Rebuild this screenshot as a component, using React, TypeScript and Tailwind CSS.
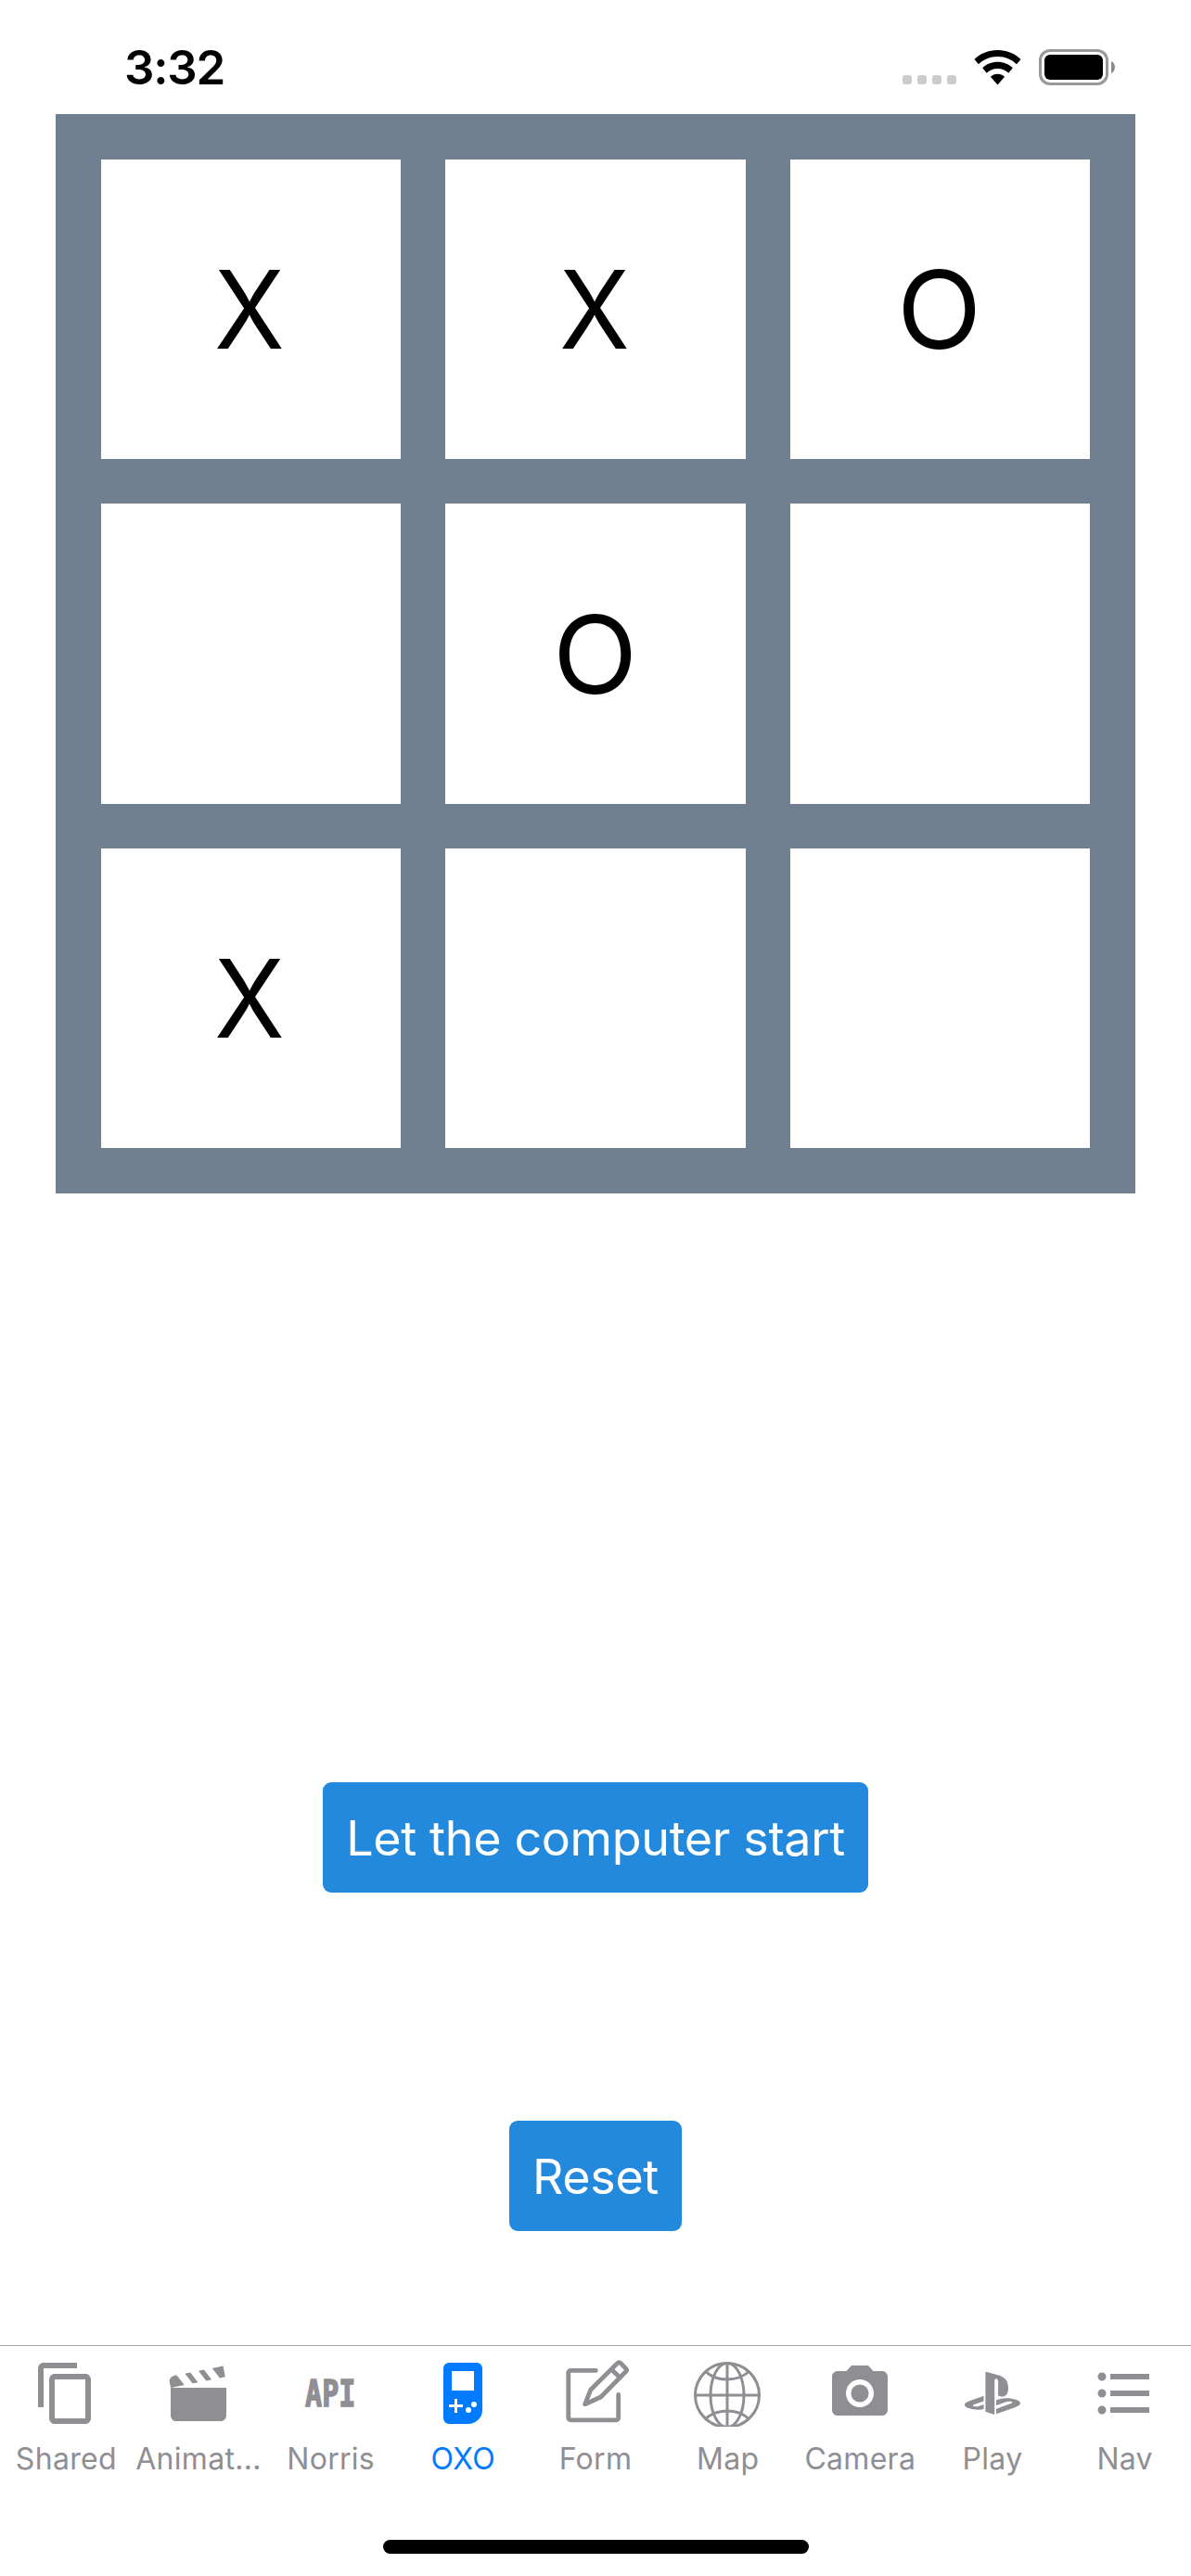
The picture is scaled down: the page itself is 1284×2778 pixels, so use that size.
import React from "react";
import { FaPlaystation } from "react-icons/fa";
import { MdPhotoCamera, MdFormatListBulleted, MdContentCopy } from "react-icons/md";

const cells = ["X", "X", "O", "", "O", "", "X", "", ""];

function Board() {
  return (
    <div className="ml-[60px] grid h-[1164px] w-[1164px] grid-cols-[323px_324px_323px] grid-rows-[323px_324px_323px] gap-12 bg-[#708090] p-[49px]">
      {cells.map((mark, i) => (
        <div key={i} className="flex items-center justify-center bg-white text-[117px] leading-none text-black">
          <span className={mark === "X" ? "mr-[3px] scale-x-[0.95]" : "mr-px scale-x-[1.02]"}>{mark}</span>
        </div>
      ))}
    </div>
  );
}

function StatusBar() {
  return (
    <div className="flex h-[123px] items-start justify-between pl-[134px] pr-[82px]">
      <div className="mt-[48px] text-[51px] font-semibold leading-[50px] tracking-[-1.2px]">3:32</div>
      <div className="mt-[53px] flex h-[39px]">
        <div className="mt-[28px] flex gap-[6px]">
          {[0, 1, 2, 3].map((i) => (
            <div key={i} className="h-[10px] w-[10px] rounded-[3px] bg-[#cbcbcb]" />
          ))}
        </div>
        <svg className="ml-[19px] mt-px h-[38px] w-[51px]" viewBox="0 0 51 38">
          <path d="M25.5 0C35.3 0 44.2 3.8 50.5 10L46 15.2C40.8 10.1 33.6 6.9 25.5 6.9S10.2 10.1 5 15.2L.5 10C6.8 3.8 15.7 0 25.5 0Z" />
          <path d="M25.5 12.8C31.8 12.8 37.6 15.2 41.8 19.2L37.3 24.8C34.2 21.7 30.1 19.9 25.5 19.9S16.8 21.7 13.7 24.8L9.2 19.2C13.4 15.2 19.2 12.8 25.5 12.8Z" />
          <path d="M25.5 25.8C28.4 25.8 31 26.9 33.1 28.7L25.5 37.5L17.9 28.7C20 26.9 22.6 25.8 25.5 25.8Z" />
        </svg>
        <div className="ml-[19px] h-[39px] w-[75px] rounded-[12px] border-[3px] border-[#999] p-[3px]">
          <div className="h-full w-full rounded-[6px] bg-black" />
        </div>
        <svg className="ml-[3px] mt-[13px] h-[13px] w-[4px]" viewBox="0 0 4 13">
          <path d="M0 0C2.4 1.1 4 3.6 4 6.5S2.4 11.9 0 13Z" fill="#8a8a8a" />
        </svg>
      </div>
    </div>
  );
}

function MovieIcon() {
  return (
    <svg viewBox="0 0 24 24" className="h-full w-full" fill="currentColor">
      <path d="M20.84 2.18L16.91 2.96L19.65 6.5L21.62 6.1L20.84 2.18M13.97 3.54L12 3.93L14.75 7.46L16.71 7.07L13.97 3.54M9.07 4.5L7.1 4.91L9.85 8.44L11.81 8.05L9.07 4.5M4.16 5.5L3.18 5.69A2 2 0 0 0 1.61 8.04L2 10L6.9 9.03L4.16 5.5M2 10V20C2 21.1 2.9 22 4 22H20C21.11 22 22 21.1 22 20V10H2Z" />
    </svg>
  );
}

function ApiIcon() {
  return (
    <div className="flex h-full w-full items-center justify-center">
      <span className="scale-x-[0.77] font-['DejaVu_Sans_Mono',monospace] text-[39px] font-bold leading-none [-webkit-text-stroke:1.5px_currentColor]">API</span>
    </div>
  );
}

function GameIcon() {
  return (
    <svg viewBox="0 0 24 24" className="h-full w-full">
      <path d="M7 1h10a2 2 0 0 1 2 2v15a5 5 0 0 1-5 5H7a2 2 0 0 1-2-2V3a2 2 0 0 1 2-2z" fill="currentColor" />
      <path d="M8 4h8v7H8zM9 14h1v2h2v1h-2v2H9v-2H7v-1h2z" fill="#fff" />
      <circle cx="14" cy="18" r="1" fill="#fff" />
      <circle cx="16" cy="16" r="1" fill="#fff" />
    </svg>
  );
}

function NoteIcon() {
  return (
    <svg viewBox="0 0 72 72" className="h-full w-full" fill="none" stroke="currentColor" strokeWidth="4.8" strokeLinecap="round" strokeLinejoin="round">
      <path d="M36.3 11.4H9.2A2.4 2.4 0 0 0 6.800 13.800V62.400A2.400 2.400 0 0 0 9.200 64.800H58.300A2.400 2.400 0 0 0 60.700 62.400V37.400" />
      <path d="M59.5 3.6L30.7 32.3L24.7 47.7L41.7 40L69 12.300Q70.200 10.900 69 9.600L63.300 3.600Q61.300 1.800 59.500 3.600ZM53.300 10.300L62.300 19" />
    </svg>
  );
}

function GlobeIcon() {
  return (
    <svg viewBox="0 0 72 72" className="h-full w-full" fill="none" stroke="currentColor" strokeWidth="3">
      <circle cx="36" cy="38" r="34.5" />
      <ellipse cx="36" cy="38" rx="18" ry="34.5" />
      <path d="M36 3V72M1 38H71M12.500 12.500Q22 21 36 21T59.500 12.500M12.500 63.500Q22 55 36 55T59.500 63.500" />
    </svg>
  );
}

const tabs: { label: string; icon: React.ReactNode; active?: boolean }[] = [
  { label: "Shared", icon: <MdContentCopy className="h-full w-full" /> },
  { label: "Animat...", icon: <MovieIcon /> },
  { label: "Norris", icon: <ApiIcon /> },
  { label: "OXO", icon: <GameIcon />, active: true },
  { label: "Form", icon: <NoteIcon /> },
  { label: "Map", icon: <GlobeIcon /> },
  { label: "Camera", icon: <MdPhotoCamera className="h-full w-full" /> },
  { label: "Play", icon: <FaPlaystation className="m-[6px] h-[60px] w-[60px]" /> },
  { label: "Nav", icon: <MdFormatListBulleted className="h-full w-full" /> },
];

function TabBar() {
  return (
    <div className="grid h-[249px] grid-cols-9 items-start border-t border-[#a7a7aa] pt-[15px]">
      {tabs.map((t) => (
        <div key={t.label} className={"flex flex-col items-center " + (t.active ? "text-[#007aff]" : "text-[#8e8e93]")}>
          <div className="mr-[0.66px] h-[72px] w-[72px] overflow-hidden">{t.icon}</div>
          <div className="mt-[15px] whitespace-nowrap text-[32px] leading-[40px] tracking-[0.3px]">{t.label}</div>
        </div>
      ))}
    </div>
  );
}

export default function App() {
  return (
    <div className="flex h-[2778px] w-[1284px] flex-col overflow-hidden bg-white font-['Inter',sans-serif] text-black">
      <StatusBar />
      <Board />
      <div className="mt-[635px] flex grow flex-col items-center">
        <button className="h-[119px] w-[588px] whitespace-nowrap rounded-[9px] bg-[#2289dc] pt-[2px] text-[52px] tracking-[-0.35px] text-white">
          Let the computer start
        </button>
        <button className="mt-[246px] h-[119px] w-[186px] rounded-[9px] bg-[#2289dc] pt-[2px] text-[52px] tracking-[-0.35px] text-white">
          Reset
        </button>
      </div>
      <TabBar />
      <div className="-mt-[39px] h-[39px] shrink-0">
        <div className="mx-auto h-[15px] w-[459px] rounded-full bg-black" />
      </div>
    </div>
  );
}
